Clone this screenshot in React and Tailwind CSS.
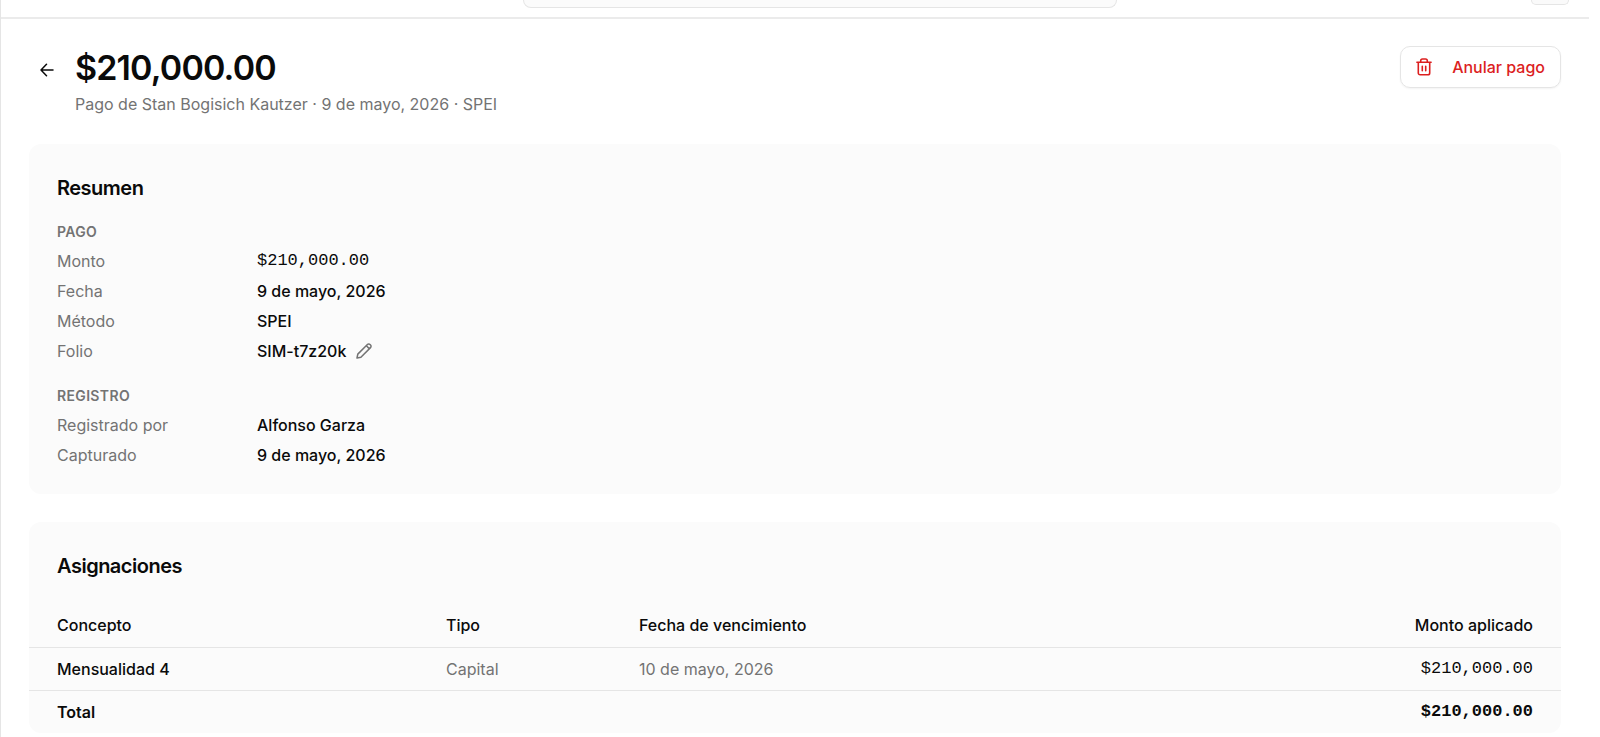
import React from 'react';

const pago = [
  { label: 'Monto', value: '$210,000.00', mono: true },
  { label: 'Fecha', value: '9 de mayo, 2026' },
  { label: 'Método', value: 'SPEI' },
  { label: 'Folio', value: 'SIM-t7z20k', editable: true },
];

const registro = [
  { label: 'Registrado por', value: 'Alfonso Garza' },
  { label: 'Capturado', value: '9 de mayo, 2026' },
];

const asignaciones = [
  { concepto: 'Mensualidad 4', tipo: 'Capital', vencimiento: '10 de mayo, 2026', monto: '$210,000.00' },
];

const ArrowLeftIcon = () => (
  <svg viewBox="0 0 14 14" className="size-3.5" fill="none" stroke="currentColor" strokeWidth="1.5" strokeLinecap="round" strokeLinejoin="round" aria-hidden="true">
    <path d="M13 7H1M6.5 1.2 1 7l5.5 5.8" />
  </svg>
);

const TrashIcon = () => (
  <svg viewBox="0 0 16 18" className="h-[18px] w-4" fill="none" stroke="currentColor" strokeWidth="1.6" strokeLinecap="round" strokeLinejoin="round" aria-hidden="true">
    <path d="M.9 4.3h14.2M2.3 4.3V15a1.8 1.8 0 0 0 1.8 1.8h7.8a1.8 1.8 0 0 0 1.8-1.8V4.3M4.7 4.1V2.8A1.8 1.8 0 0 1 6.5 1h3a1.8 1.8 0 0 1 1.8 1.8v1.3M6.3 8.2v4.6M9.7 8.2v4.6" />
  </svg>
);

const PencilIcon = () => (
  <svg viewBox="0 0 16 16" className="size-4" fill="none" stroke="currentColor" strokeWidth="1.5" strokeLinecap="round" strokeLinejoin="round" aria-hidden="true">
    <path d="M1 15l.8-3.9L11.4 1.5a1.8 1.8 0 0 1 2.6 0l.5.5a1.8 1.8 0 0 1 0 2.6L4.9 14.2 1 15ZM10.4 2.8l2.8 2.8" />
  </svg>
);

const DetailList = ({ title, rows }) => {
  return (
    <section>
      <h3 className="text-sm leading-5 font-semibold tracking-wide text-[#737373] uppercase">{title}</h3>
      <dl className="mt-1">
        {rows.map((row) => (
          <div key={row.label} className="flex h-[30px] items-center">
            <dt className="w-[200px] text-[#737373]">{row.label}</dt>
            <dd className="flex items-center gap-2.5 font-medium">
              <span className={row.mono ? "font-['Liberation_Mono',monospace] text-[17px]" : ''}>{row.value}</span>
              {row.editable && (
                <button type="button" aria-label="Editar folio" className="text-[#737373]">
                  <PencilIcon />
                </button>
              )}
            </dd>
          </div>
        ))}
      </dl>
    </section>
  );
};

const App = () => {
  return (
    <div className="min-h-screen border-l border-[#e5e5e5] bg-white pr-[11px] font-['Inter',sans-serif] text-base leading-6 text-[#0a0a0a]">
      <header className="flex h-[19px] items-start border-b-2 border-[#ebebeb] pr-5">
        <div className="w-[522px]" />
        <div className="h-2 w-[594px] rounded-b-lg border border-t-0 border-[#e5e5e5] bg-[#fbfbfb]" />
        <div className="ml-auto h-[5px] w-[38px] rounded-b-lg border border-t-0 border-[#e5e5e5] bg-[#fafafa]" />
      </header>

      <main className="px-7 pt-[27px]">
        <div className="flex items-start justify-between">
          <div className="flex items-start">
            <a href="#pagos" aria-label="Volver" className="mt-1.5 flex size-9 items-center justify-center">
              <ArrowLeftIcon />
            </a>
            <div className="ml-2.5">
              <h1 className="text-[34px] leading-11 font-semibold tracking-tight">$210,000.00</h1>
              <p className="mt-0.5 text-[#737373]">Pago de Stan Bogisich Kautzer · 9 de mayo, 2026 · SPEI</p>
            </div>
          </div>
          <button type="button" className="flex h-[42px] items-center gap-5 rounded-[10px] border border-[#e5e5e5] px-[15px] font-medium text-[#dc1f1f] shadow-xs">
            <TrashIcon />
            Anular pago
          </button>
        </div>

        <section className="mt-7 rounded-xl bg-[#fbfbfb] px-7 pt-7 pb-6">
          <h2 className="text-xl leading-8 font-semibold tracking-tight">Resumen</h2>
          <div className="mt-[18px] flex flex-col gap-5">
            <DetailList title="Pago" rows={pago} />
            <DetailList title="Registro" rows={registro} />
          </div>
        </section>

        <section className="mt-7 rounded-xl bg-[#fbfbfb] pt-7">
          <h2 className="px-7 text-xl leading-8 font-semibold tracking-tight">Asignaciones</h2>
          <table className="mt-[22px] w-full text-left">
            <thead>
              <tr className="h-[43px] border-b border-[#e5e5e5]">
                <th className="w-[417px] pl-7 font-medium">Concepto</th>
                <th className="w-[193px] font-medium">Tipo</th>
                <th className="font-medium">Fecha de vencimiento</th>
                <th className="pr-7 text-right font-medium">Monto aplicado</th>
              </tr>
            </thead>
            <tbody>
              {asignaciones.map((item) => (
                <tr key={item.concepto} className="h-[43px] border-b border-[#e5e5e5]">
                  <td className="pl-7 font-medium">{item.concepto}</td>
                  <td className="text-[#737373]">{item.tipo}</td>
                  <td className="text-[#737373]">{item.vencimiento}</td>
                  <td className="pr-7 text-right font-['Liberation_Mono',monospace] text-[17px]">{item.monto}</td>
                </tr>
              ))}
            </tbody>
            <tfoot>
              <tr className="h-[43px] font-semibold">
                <td colSpan={3} className="pl-7">Total</td>
                <td className="pr-7 text-right font-['Liberation_Mono',monospace] text-[17px]">$210,000.00</td>
              </tr>
            </tfoot>
          </table>
        </section>
      </main>
    </div>
  );
};

export default App;
